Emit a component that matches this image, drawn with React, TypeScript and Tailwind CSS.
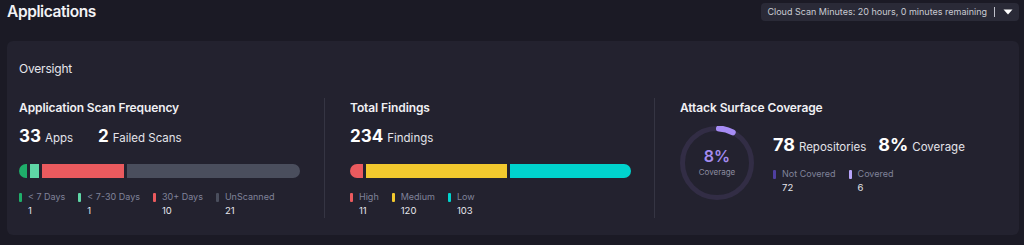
import React from "react";

const font = { fontFamily: "Inter, 'Noto Sans', sans-serif" };

function LegendItem({ color, label, value }: { color: string; label: string; value: string | number }) {
  return (
    <div className="flex flex-col">
      <div className="flex items-center gap-[6px] h-[14px]">
        <span className={`w-[3px] h-[9px] rounded-[1px] ${color}`} />
        <span className="text-[9px] leading-[14px] text-[#80829a]">{label}</span>
      </div>
      <div className="pl-[9px] text-[9.5px] leading-[14px] text-[#e6e6ec]">{value}</div>
    </div>
  );
}

function Donut() {
  const size = 74;
  const sw = 5;
  const r = (size - sw) / 2;
  const c = 2 * Math.PI * r;
  const pct = 0.08;
  return (
    <div className="relative w-[74px] h-[74px] shrink-0">
      <svg width={size} height={size} viewBox={`0 0 ${size} ${size}`}>
        <circle cx={size / 2} cy={size / 2} r={r} fill="none" stroke="#322d45" strokeWidth={sw} />
        <circle
          cx={size / 2}
          cy={size / 2}
          r={r}
          fill="none"
          stroke="#a68cf5"
          strokeWidth={sw + 1}
          strokeLinecap="round"
          strokeDasharray={`${c * pct - 3} ${c}`}
          strokeDashoffset={-2}
          transform={`rotate(-90 ${size / 2} ${size / 2})`}
        />
      </svg>
      <div className="absolute inset-0 flex flex-col items-center justify-center">
        <span className="text-[16px] leading-[18px] font-semibold text-[#a48cf0] mt-[-2px]">8%</span>
        <span className="text-[8px] leading-[12px] text-[#8c8ca0] mt-[1px]">Coverage</span>
      </div>
    </div>
  );
}

export default function App() {
  return (
    <div className="w-[1024px] h-[245px] bg-[#1b1a25] pl-[7px] pr-[5px] text-white overflow-hidden" style={font}>
      <div className="flex items-center justify-between h-[22px]">
        <div className="text-[15.5px] leading-[22px] font-semibold tracking-[-0.4px] text-[#f2f2f5] mt-[1px]">Applications</div>
        <div className="flex items-center h-[18px] mt-[1px] rounded-[4px] bg-[#2a2a37] pl-[6px] pr-[6px]">
          <span className="text-[9px] leading-[18px] text-[#c9cad3]">Cloud Scan Minutes: 20 hours, 0 minutes remaining</span>
          <span className="ml-[7px] w-px h-[10px] bg-[#bfc0ca]" />
          <svg className="ml-[8px]" width="10" height="6" viewBox="0 0 10 6">
            <path d="M0.5 0.5 L9.5 0.5 L5 5.5 Z" fill="#ffffff" />
          </svg>
        </div>
      </div>

      <div className="mt-[19px] h-[194px] rounded-[6px] bg-[#23222f] px-[12px] pb-[17px]">
        <div className="pt-[20px] text-[12px] leading-[16px] tracking-[-0.2px] text-[#e6e6ec]">Oversight</div>

        <div className="flex mt-[21px]">
          {/* Column 1 */}
          <div className="w-[305px] shrink-0 flex flex-col">
            <div className="text-[12px] leading-[20px] font-semibold tracking-[-0.1px] text-[#f0f0f4]">Application Scan Frequency</div>
            <div className="flex items-baseline mt-[6px] h-[24px]">
              <span className="text-[17px] font-bold text-white">33</span>
              <span className="text-[11.5px] text-[#e4e4ea] ml-[4px]">Apps</span>
              <span className="text-[17px] font-bold text-white ml-[25px]">2</span>
              <span className="text-[11.5px] text-[#e4e4ea] ml-[4px]">Failed Scans</span>
            </div>
            <div className="flex w-[281px] h-[14px] gap-[3px] mt-[16px]">
              <div className="grow-[1] basis-0 bg-[#1fae6a] rounded-l-full" />
              <div className="grow-[1] basis-0 bg-[#5fd6a6]" />
              <div className="grow-[10] basis-0 bg-[#ea5a5e]" />
              <div className="grow-[21] basis-0 bg-[#4a4e5d] rounded-r-full" />
            </div>
            <div className="flex gap-[13px] mt-[12px]">
              <LegendItem color="bg-[#1fae6a]" label="< 7 Days" value="1" />
              <LegendItem color="bg-[#5fd6a6]" label="< 7-30 Days" value="1" />
              <LegendItem color="bg-[#ea5a5e]" label="30+ Days" value="10" />
              <LegendItem color="bg-[#4a4e5d]" label="UnScanned" value="21" />
            </div>
          </div>

          {/* Column 2 */}
          <div className="w-[330px] shrink-0 flex flex-col border-l border-[#353543] pl-[25px]">
            <div className="text-[12px] leading-[20px] font-semibold tracking-[-0.1px] text-[#f0f0f4]">Total Findings</div>
            <div className="flex items-baseline mt-[6px] h-[24px]">
              <span className="text-[17px] font-bold text-white">234</span>
              <span className="text-[11.5px] text-[#e4e4ea] ml-[4px]">Findings</span>
            </div>
            <div className="flex w-[281px] h-[14px] gap-[3px] mt-[16px]">
              <div className="grow-[11] basis-0 bg-[#ea5a5e] rounded-l-full" />
              <div className="grow-[120] basis-0 bg-[#f2c92e]" />
              <div className="grow-[103] basis-0 bg-[#00d3cd] rounded-r-full" />
            </div>
            <div className="flex gap-[13px] mt-[12px]">
              <LegendItem color="bg-[#ea5a5e]" label="High" value="11" />
              <LegendItem color="bg-[#f2c92e]" label="Medium" value="120" />
              <LegendItem color="bg-[#00d3cd]" label="Low" value="103" />
            </div>
          </div>

          {/* Column 3 */}
          <div className="flex-1 flex flex-col border-l border-[#353543] pl-[25px]">
            <div className="text-[12px] leading-[20px] font-semibold tracking-[-0.1px] text-[#f0f0f4]">Attack Surface Coverage</div>
            <div className="flex items-center mt-[8px] pb-[18px]">
              <Donut />
              <div className="flex flex-col ml-[19px]">
                <div className="flex items-baseline h-[24px]">
                  <span className="text-[18px] font-bold text-white">78</span>
                  <span className="text-[11.5px] text-[#e4e4ea] ml-[4px]">Repositories</span>
                  <span className="text-[18px] font-bold text-white ml-[12px]">8%</span>
                  <span className="text-[11.5px] text-[#e4e4ea] ml-[4px]">Coverage</span>
                </div>
                <div className="flex gap-[13px] mt-[12px]">
                  <LegendItem color="bg-[#4f3fa0]" label="Not Covered" value="72" />
                  <LegendItem color="bg-[#b8a4fb]" label="Covered" value="6" />
                </div>
              </div>
            </div>
          </div>
        </div>
      </div>
    </div>
  );
}
